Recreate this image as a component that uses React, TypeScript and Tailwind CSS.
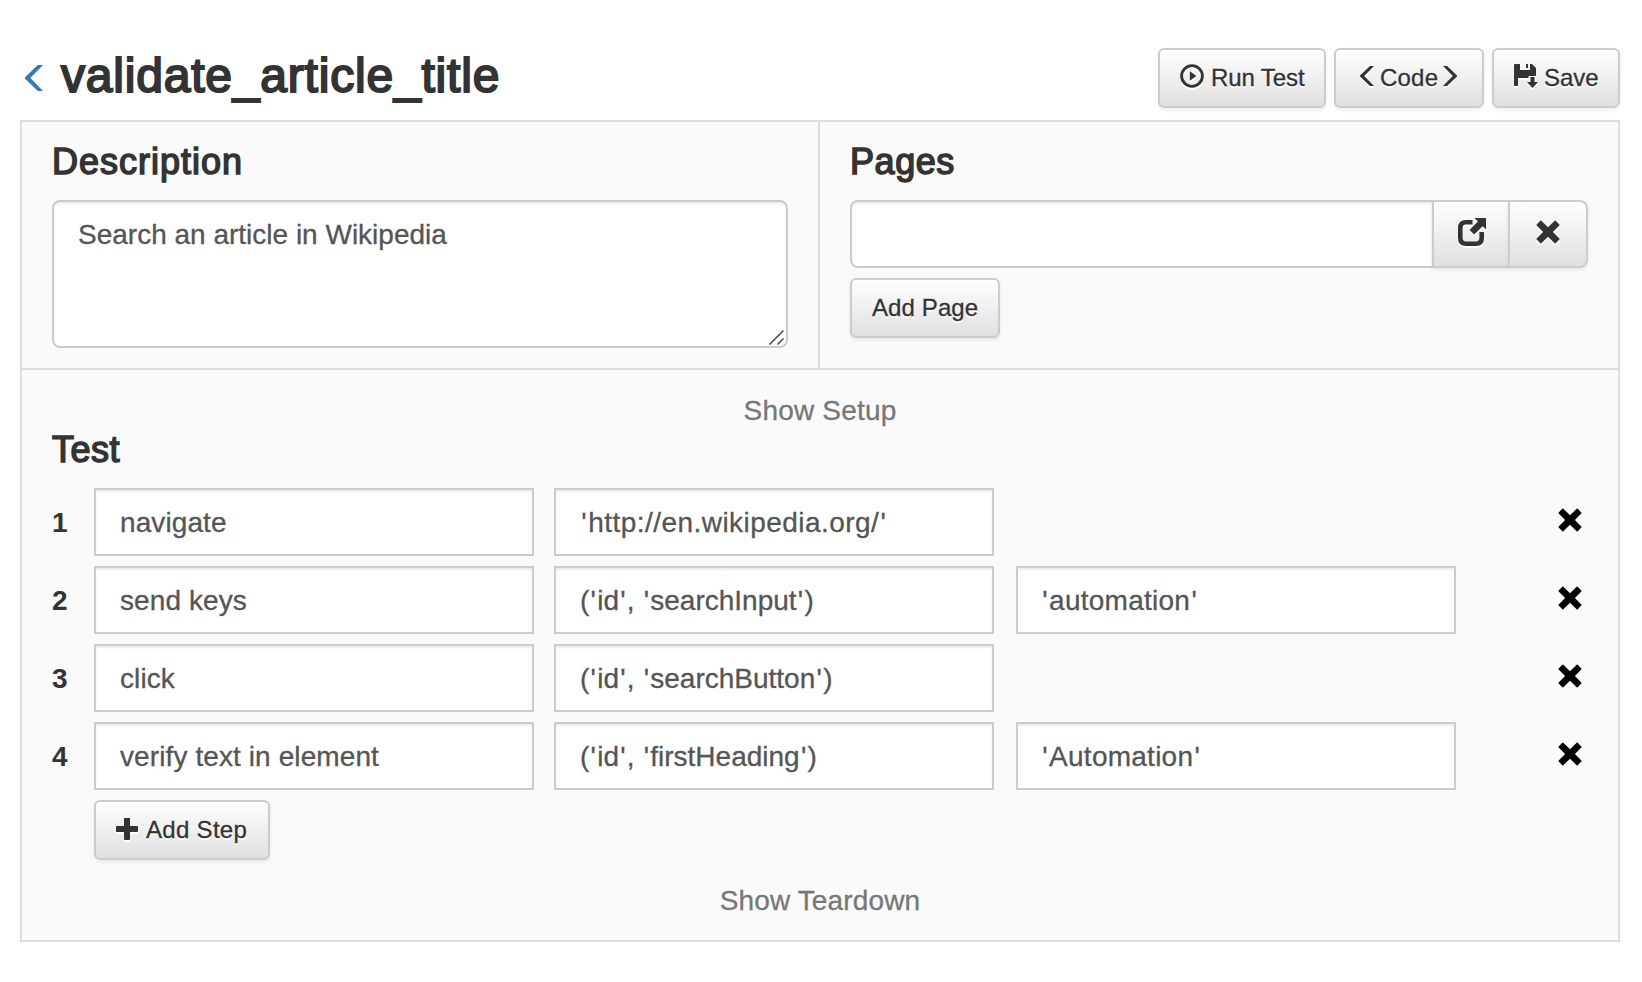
import React from 'react';

type IconProps = { className?: string };

const BUTTON =
  'flex shrink-0 items-center border-2 border-[#ccc] bg-linear-to-b from-white to-[#e0e0e0] text-[24px] leading-[34px] text-[#333] shadow-[0_2px_4px_rgba(0,0,0,0.075)] [text-shadow:0_2px_0_#fff]';
const ICON_SHADOW = 'drop-shadow-[0_2px_0_#fff]';
const FIELD = 'border-2 border-[#ccc] bg-white shadow-[inset_0_2px_2px_rgba(0,0,0,0.075)]';
const BODY_WEIGHT = '[-webkit-text-stroke:0.3px_currentColor]';

function Cross({ className = '' }: IconProps) {
  return (
    <svg viewBox="0 0 24 24" fill="currentColor" className={`size-6 shrink-0 ${className}`}>
      <path d="M5.3.8 12 7.3 18.7.8q.5-.5 1 0l3.6 3.6q.5.5 0 1L16.9 12l6.4 6.6q.5.5 0 1l-3.6 3.6q-.5.5-1 0L12 16.7l-6.700 6.500q-.5.5-1 0L.7 19.6q-.5-.5 0-1L7.1 12 .7 5.4q-.5-.5 0-1L4.3.8q.5-.5 1 0Z" />
    </svg>
  );
}

function Chevron({ className = 'h-5 w-3.5' }: IconProps) {
  return (
    <svg viewBox="0 0 14 20" preserveAspectRatio="none" fill="currentColor" className={`shrink-0 ${className}`}>
      <path d="M10 0h4L4.2 10 14 20h-4L0 10.600V9.400Z" />
    </svg>
  );
}

function PlayCircle({ className = '' }: IconProps) {
  return (
    <svg viewBox="0 0 24 24" className={`size-6 shrink-0 ${className}`}>
      <circle cx="12" cy="12" r="10.4" fill="none" stroke="currentColor" strokeWidth="2.8" />
      <path d="M9.900 7.200 16.300 12l-6.400 4.800Z" fill="currentColor" />
    </svg>
  );
}

function FloppySave({ className = '' }: IconProps) {
  return (
    <svg viewBox="0 0 24 24" fill="currentColor" className={`size-6 shrink-0 ${className}`}>
      <path d="M1 0H6V6H16V0H18L22 4V12H14.500V14H4V22H1Q0 22 0 21V1Q0 0 1 0Z" />
      <path d="M12 0h2v4h-2Z" />
      <path d="M16.500 13h4v5h3.500l-5.500 6-5.500-6h3.500Z" />
    </svg>
  );
}

function NewWindow({ className = '' }: IconProps) {
  return (
    <svg viewBox="0 0 28 28" className={`size-7 shrink-0 ${className}`}>
      <path
        d="M14.500 4.300H8Q2.300 4.300 2.300 10v10Q2.300 25.700 8 25.700h10Q23.700 25.700 23.700 20v-6"
        fill="none"
        stroke="currentColor"
        strokeWidth="4.600"
      />
      <path d="M16.500 0H28v11.500l-3.300-3.300-8.600 8.200-4.500-4.500 8.300-8.500Z" fill="currentColor" />
    </svg>
  );
}

function Plus({ className = '' }: IconProps) {
  return (
    <svg viewBox="0 0 22 22" fill="currentColor" className={`size-[22px] shrink-0 ${className}`}>
      <path d="M8.800 0h4.400q.8 0 .8.8V8h7.200q.8 0 .8.8v4.400q0 .8-.8.8H14v7.200q0 .8-.8.8H8.800q-.8 0-.8-.8V14H.8q-.8 0-.8-.8V8.800Q0 8 .8 8H8V.8Q8 0 8.800 0Z" />
    </svg>
  );
}

function Literal({ text }: { text: string }) {
  return (
    <span className={`whitespace-pre ${text.includes('://') ? 'tracking-[0.45px]' : ''}`}>
      {text.split(/(')/).map((part, i) =>
        part === "'" ? (
          <span key={i} className="px-[1.25px]">
            {part}
          </span>
        ) : (
          part
        ),
      )}
    </span>
  );
}

const steps: string[][] = [
  ['navigate', "'http://en.wikipedia.org/'"],
  ['send keys', "('id', 'searchInput')", "'automation'"],
  ['click', "('id', 'searchButton')"],
  ['verify text in element', "('id', 'firstHeading')", "'Automation'"],
];

const H4 = 'text-[36px] leading-10 font-normal text-[#333] [-webkit-text-stroke:1.5px_#333]';

export default function App() {
  return (
    <div className="min-h-[982px] w-[1642px] bg-white pr-[22px] pl-5 font-['Liberation_Sans',Arial,sans-serif] text-[28px] leading-10 text-[#333]">
      <header className="flex h-[120px] items-start pt-12">
        <Chevron className="mt-[17px] ml-[5px] h-[26px] w-[18px] text-[#337ab7]" />
        <h1 className="mt-px ml-[18px] h-[54px] flex-1 text-[48px] leading-[54px] font-normal tracking-[0.8px] [-webkit-text-stroke:2px_#333]">
          validate_article_title
        </h1>
        <div className="flex gap-2">
          <button className={`${BUTTON} ${BODY_WEIGHT} h-[60px] w-[168px] rounded-md pl-5`}>
            <PlayCircle className={`-mt-1 ${ICON_SHADOW}`} />
            <span className="ml-[7px] tracking-[-0.1px] whitespace-nowrap">Run Test</span>
          </button>
          <button className={`${BUTTON} ${BODY_WEIGHT} h-[60px] w-[150px] rounded-md pl-6`}>
            <Chevron className={`-mt-1 h-5 w-3.5 ${ICON_SHADOW}`} />
            <span className="ml-[6px] tracking-[0.2px]">Code</span>
            <Chevron className="-mt-1 ml-[5px] h-5 w-3.5 rotate-180 drop-shadow-[0_-2px_0_#fff]" />
          </button>
          <button className={`${BUTTON} ${BODY_WEIGHT} h-[60px] w-32 rounded-md pl-5`}>
            <FloppySave className={`-mt-1 ${ICON_SHADOW}`} />
            <span className="ml-[6px]">Save</span>
          </button>
        </div>
      </header>

      <main className="h-[822px] border-2 border-[#ddd] bg-[#fafafa]">
        <div className="flex h-[248px] border-b-2 border-[#ddd]">
          <section className="w-[798px] border-r-2 border-[#ddd] pt-5 pr-[30px] pl-[30px]">
            <h4 className={`${H4} tracking-[1px]`}>Description</h4>
            <div
              className={`${FIELD} ${BODY_WEIGHT} relative mt-[18px] h-[148px] w-[736px] rounded-lg px-6 pt-[13px] text-[#555]`}
            >
              Search an article in Wikipedia
              <svg
                viewBox="0 0 15 15"
                className="absolute right-[2px] bottom-px size-[15px]"
                stroke="#444"
                strokeWidth="1.500"
              >
                <path d="M0.500 14.500 14.500 0.500M8.500 14.500l6-6" />
              </svg>
            </div>
          </section>
          <section className="flex-1 pt-5 pl-[30px]">
            <h4 className={`${H4} tracking-[0.55px]`}>Pages</h4>
            <div className="mt-[18px] flex h-[68px] w-[738px]">
              <div className={`${FIELD} w-[582px] rounded-l-lg border-r-0`} />
              <button className={`${BUTTON} w-[76px] border-r-0 pl-6`}>
                <NewWindow className={`-mt-1 ${ICON_SHADOW}`} />
              </button>
              <button className={`${BUTTON} w-20 rounded-r-lg pl-[26px]`}>
                <Cross className={`-mt-1 ${ICON_SHADOW}`} />
              </button>
            </div>
            <button
              className={`${BUTTON} ${BODY_WEIGHT} mt-[10px] h-[60px] w-[150px] rounded-md pl-5 tracking-[0.1px]`}
            >
              Add Page
            </button>
          </section>
        </div>

        <section className="pl-[30px]">
          <div className={`${BODY_WEIGHT} mr-[30px] pt-[21px] text-center tracking-[0.2px] text-[#777]`}>
            Show Setup
          </div>
          <h4 className={`${H4} -mt-px tracking-[0.5px]`}>Test</h4>
          <div className="mt-[18px] flex flex-col gap-[10px]">
            {steps.map(([action, target, value], i) => (
              <div key={i} className="flex h-[68px] items-center">
                <span className="w-[42px] pt-px font-bold">{i + 1}</span>
                <div className="flex w-[1464px]">
                  <div
                    className={`${FIELD} ${BODY_WEIGHT} flex h-[68px] w-[440px] items-center px-6 pt-[2px] tracking-[0.1px] text-[#555]`}
                  >
                    {action}
                  </div>
                  <div
                    className={`${FIELD} ${BODY_WEIGHT} ml-5 flex h-[68px] w-[440px] items-center px-6 pt-[2px] text-[#555]`}
                  >
                    <Literal text={target} />
                  </div>
                  {value && (
                    <div
                      className={`${FIELD} ${BODY_WEIGHT} ml-[22px] flex h-[68px] w-[440px] items-center pt-[2px] pl-[23px] tracking-[0.25px] text-[#555]`}
                    >
                      <Literal text={value} />
                    </div>
                  )}
                </div>
                <Cross className="-mt-1 text-black" />
              </div>
            ))}
          </div>
          <button className={`${BUTTON} ${BODY_WEIGHT} mt-[10px] ml-[42px] h-[60px] w-44 rounded-md pl-5`}>
            <Plus className={`-mt-[2px] ${ICON_SHADOW}`} />
            <span className="ml-[8px] tracking-[0.3px] whitespace-nowrap">Add Step</span>
          </button>
          <div className={`${BODY_WEIGHT} mt-[21px] mr-[30px] text-center tracking-[0.15px] text-[#777]`}>
            Show Teardown
          </div>
        </section>
      </main>
    </div>
  );
}
